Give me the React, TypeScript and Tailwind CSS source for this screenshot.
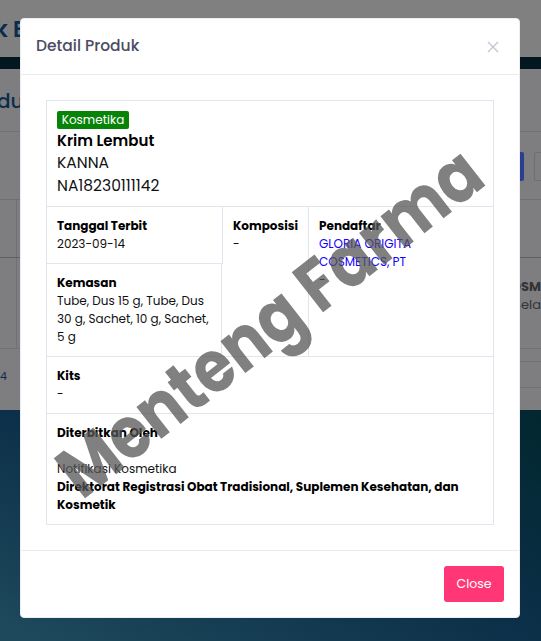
const font = "font-['Poppins','Inter','Liberation_Sans',sans-serif]";

function Cell({ label, children, className = "" }: { label: string; children: React.ReactNode; className?: string }) {
  return (
    <div className={`px-[10px] pt-[10px] ${className}`}>
      <p className="text-[12px] leading-[18px] font-bold text-black">{label}</p>
      {children}
    </div>
  );
}

export default function App() {
  return (
    <div className={`relative h-[641px] w-[541px] overflow-hidden bg-[#808080] ${font}`}>
      {/* page behind the modal */}
      <div className="flex h-[57px] items-center pt-[2px] text-[22px] font-semibold whitespace-nowrap text-[#0b2c4a]">
        <span className="ml-[-5px]">k Expired</span>
      </div>
      <div className="h-[12px] bg-[#02171f]" />
      <div className="h-[341px] bg-[#7e7e81]">
        <div className="flex h-[63px] items-center border-b border-[#727275] pt-[2px] text-[20px] font-medium text-[#0b2c4a]">
          <span className="ml-[-3px]">du</span>
        </div>
        <div className="flex h-[68px] items-center justify-end border-b border-[#6f6f72] pt-[2px]">
          <div className="mr-[-13px] flex gap-[10px]">
            <div className="h-[29px] w-[20px] rounded-[2px] bg-[#2c3f8f]" />
            <div className="h-[29px] w-[20px] rounded-[2px] border border-[#6f6f72]" />
          </div>
        </div>
        <div className="h-[58px] border-b border-[#5f5f62]">
          <div className="ml-[16px] h-full w-px bg-[#727275]" />
        </div>
        <div className="relative flex h-[91px] flex-col items-end border-b border-[#727275] pt-[20px] text-[13px] leading-[18px] whitespace-nowrap text-[#333]">
          <div className="absolute top-0 bottom-0 left-[16px] w-px bg-[#727275]" />
          <span className="font-bold">OSM</span>
          <span>Sela</span>
        </div>
        <div className="flex h-[13px] justify-end">
          <div className="w-[21px] border-b border-[#727275]" />
        </div>
        <div className="flex h-[26px] items-center justify-between pt-[2px] text-[11px] text-[#0b2c4a]">
          <span>4</span>
          <div className="h-full w-[21px] border-b border-[#727275]" />
        </div>
      </div>
      <div className="h-[231px] bg-linear-to-tr from-[#1f4a5c] via-[#0c3049] to-[#02272f]" />

      {/* modal */}
      <div className="absolute top-[18px] left-[20px] flex h-[600px] w-[500px] flex-col rounded-[4px] border border-[#ebecf4] bg-white">
        <div className="flex h-[56px] items-center justify-between border-b border-[#e9ebf1] pr-[19px] pb-[2px] pl-[15px]">
          <h2 className="text-[15.5px] font-medium text-[#4b4b63]">Detail Produk</h2>
          <svg width="14" height="14" viewBox="0 0 14 14" className="mt-[2px]" fill="none" stroke="#c4c6d4" strokeWidth="1.4">
            <path d="M2 2l10 10M12 2L2 12" />
          </svg>
        </div>

        <div className="flex-1 px-[25px] pt-[25px]">
          <div className="border border-[#e2e4ee] text-[12px] leading-[18px] text-[#111]">
            <div className="h-[106px] border-b border-[#e2e4ee] px-[10px] pt-[10px]">
              <span className="block h-[18px] w-[72px] rounded-[2px] bg-[#078307] text-center text-[12px] leading-[18px] text-white">Kosmetika</span>
              <p className="pt-px text-[15px] leading-[22px] font-semibold text-black">Krim Lembut</p>
              <p className="text-[15.5px] leading-[22px]">KANNA</p>
              <p className="text-[15.5px] leading-[23px]">NA18230111142</p>
            </div>

            <div className="flex h-[150px] border-b border-[#e2e4ee]">
              <div className="flex w-[176px] flex-col">
                <Cell label="Tanggal Terbit" className="h-[57px] border-r border-b border-[#e2e4ee]">
                  <p>2023-09-14</p>
                </Cell>
                <Cell label="Kemasan" className="mr-px flex-1 border-r border-[#e2e4ee]">
                  <p>Tube, Dus 15 g, Tube, Dus 30 g, Sachet, 10 g, Sachet, 5 g</p>
                </Cell>
              </div>
              <Cell label="Komposisi" className="w-[86px] border-r border-[#e2e4ee]">
                <p>-</p>
              </Cell>
              <Cell label="Pendaftar" className="flex-1">
                <p className="text-[#1500ff]">GLORIA ORIGITA COSMETICS, PT</p>
                <p>-</p>
              </Cell>
            </div>

            <Cell label="Kits" className="h-[57px] border-b border-[#e2e4ee]">
              <p>-</p>
            </Cell>

            <Cell label="Diterbitkan Oleh" className="h-[110px]">
              <p className="mt-[18px]">Notifikasi Kosmetika</p>
              <p className="font-bold text-black">Direktorat Registrasi Obat Tradisional, Suplemen Kesehatan, dan Kosmetik</p>
            </Cell>
          </div>
        </div>

        <div className="flex h-[67px] items-center justify-end border-t border-[#e9ebf1] pr-[15px]">
          <button type="button" className="h-[36px] w-[60px] rounded-[3px] bg-[#ff3776] text-[12.5px] font-normal text-white">
            Close
          </button>
        </div>
      </div>

      {/* watermark */}
      <div className="pointer-events-none absolute top-[291px] left-[-30px] w-[600px] -rotate-[38deg] scale-y-[1.15] text-center text-[63px] leading-none font-bold whitespace-nowrap text-[#555555]/75">
        Menteng Farma
      </div>
    </div>
  );
}
